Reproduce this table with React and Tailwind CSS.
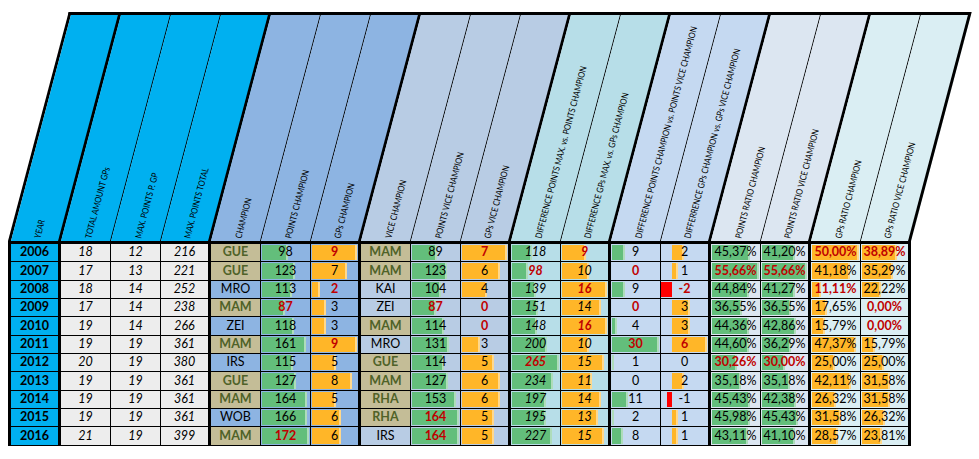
import React from "react";

const HEADERS = [
  "YEAR",
  "TOTAL AMOUNT GPs",
  "MAX. POINTS P. GP",
  "MAX. POINTS TOTAL",
  "CHAMPION",
  "POINTS CHAMPION",
  "GPs CHAMPION",
  "VICE CHAMPION",
  "POINTS VICE CHAMPION",
  "GPs VICE CHAMPION",
  "DIFFERENCE POINTS MAX. vs. POINTS CHAMPION",
  "DIFFERENCE GPs MAX. vs. GPs CHAMPION",
  "DIFFERENCE POINTS CHAMPION vs. POINTS VICE CHAMPION",
  "DIFFERRENCE GPs CHAMPION vs. GPs VICE CHAMPION",
  "POINTS RATIO CHAMPION",
  "POINTS RATIO VICE CHAMPION",
  "GPs RATIO CHAMPION",
  "GPs RATIO VICE CHAMPION",
];

const HEAD_BG = [
  "bg-[#00b0f0]", "bg-[#00b0f0]", "bg-[#00b0f0]", "bg-[#00b0f0]",
  "bg-[#8db4e2]", "bg-[#8db4e2]", "bg-[#8db4e2]",
  "bg-[#b8cce4]", "bg-[#b8cce4]", "bg-[#b8cce4]",
  "bg-[#b7dee8]", "bg-[#b7dee8]",
  "bg-[#c5d9f1]", "bg-[#c5d9f1]",
  "bg-[#dce6f1]", "bg-[#dce6f1]",
  "bg-[#daeef3]", "bg-[#daeef3]",
];

const BODY_BG = [
  "bg-[#00b0f0]", "bg-[#ededed]", "bg-[#ededed]", "bg-[#ededed]",
  "bg-[#8db4e2]", "bg-[#8db4e2]", "bg-[#8db4e2]",
  "bg-[#b8cce4]", "bg-[#b8cce4]", "bg-[#b8cce4]",
  "bg-[#b7dee8]", "bg-[#b7dee8]",
  "bg-[#c5d9f1]", "bg-[#c5d9f1]",
  "bg-[#dce6f1]", "bg-[#dce6f1]",
  "bg-[#daeef3]", "bg-[#daeef3]",
];

const THICK = new Set([0, 3, 6, 9, 11, 13, 15, 17]);
const ITALIC = new Set([1, 2, 3, 10, 11]);

// column -> [bar colour, scale max]
const BARS = {
  5: ["green", 172],
  6: ["orange", 9],
  8: ["green", 164],
  9: ["orange", 7],
  10: ["green", 265],
  11: ["orange", 16],
  12: ["green", 30],
  14: ["green", 55.66],
  15: ["green", 55.66],
  16: ["orange", 50],
  17: ["orange", 50],
};

const TAN = new Set(["GUE", "MAM", "RHA"]);

const ROWS = [
  [2006, 18, 12, 216, "GUE", 98, 9, "MAM", 89, 7, 118, 9, 9, 2, "45,37%", "41,20%", "50,00%", "38,89%"],
  [2007, 17, 13, 221, "GUE", 123, 7, "MAM", 123, 6, 98, 10, 0, 1, "55,66%", "55,66%", "41,18%", "35,29%"],
  [2008, 18, 14, 252, "MRO", 113, 2, "KAI", 104, 4, 139, 16, 9, -2, "44,84%", "41,27%", "11,11%", "22,22%"],
  [2009, 17, 14, 238, "MAM", 87, 3, "ZEI", 87, 0, 151, 14, 0, 3, "36,55%", "36,55%", "17,65%", "0,00%"],
  [2010, 19, 14, 266, "ZEI", 118, 3, "MAM", 114, 0, 148, 16, 4, 3, "44,36%", "42,86%", "15,79%", "0,00%"],
  [2011, 19, 19, 361, "MAM", 161, 9, "MRO", 131, 3, 200, 10, 30, 6, "44,60%", "36,29%", "47,37%", "15,79%"],
  [2012, 20, 19, 380, "IRS", 115, 5, "GUE", 114, 5, 265, 15, 1, 0, "30,26%", "30,00%", "25,00%", "25,00%"],
  [2013, 19, 19, 361, "GUE", 127, 8, "MAM", 127, 6, 234, 11, 0, 2, "35,18%", "35,18%", "42,11%", "31,58%"],
  [2014, 19, 19, 361, "MAM", 164, 5, "RHA", 153, 6, 197, 14, 11, -1, "45,43%", "42,38%", "26,32%", "31,58%"],
  [2015, 19, 19, 361, "WOB", 166, 6, "RHA", 164, 5, 195, 13, 2, 1, "45,98%", "45,43%", "31,58%", "26,32%"],
  [2016, 21, 19, 399, "MAM", 172, 6, "IRS", 164, 5, 227, 15, 8, 1, "43,11%", "41,10%", "28,57%", "23,81%"],
];

// col -> rows whose value is printed in red
const RED = {
  5: [3, 10],
  6: [0, 2, 5],
  8: [3, 9, 10],
  9: [0, 3, 4],
  10: [1, 6],
  11: [0, 2, 4],
  12: [1, 3, 5],
  13: [2, 5],
  14: [1, 6],
  15: [1, 6],
  16: [0, 2],
  17: [0, 3, 4],
};

const num = (v) => (typeof v === "string" ? parseFloat(v.replace(",", ".")) : v);

function Bar({ color, left, width }) {
  const cls =
    color === "green"
      ? "bg-[#63be7b] border-r-2 border-[#aedcba]"
      : color === "red"
        ? "bg-[#ff0000]"
        : "bg-[#ffb628] border-r-2 border-[#ffd88c]";
  return (
    <div
      className={`absolute top-[1px] bottom-[1px] ${cls}`}
      style={{ left, width }}
    />
  );
}

function BodyCell({ value, col, row }) {
  const red = RED[col]?.includes(row);
  let bg = BODY_BG[col];
  let text = "text-black";
  let weight = "";
  if ((col === 4 || col === 7) && TAN.has(value)) {
    bg = "bg-[#c4bd97]";
    text = "text-[#4f6228]";
    weight = "font-bold";
  }
  if (col === 0) weight = "font-bold";
  if (red) {
    text = "text-[#c00000]";
    weight = "font-bold";
  }

  let bar = null;
  if (BARS[col]) {
    const [color, max] = BARS[col];
    const p = (num(value) / max) * 100;
    if (p > 0) bar = <Bar color={color} left="1px" width={`calc(${p}% - 2px)`} />;
  } else if (col === 13) {
    const v = value;
    if (v > 0) bar = <Bar color="orange" left="24%" width={`${(v / 6) * 74}%`} />;
    if (v < 0) {
      const w = (-v / 2) * 23;
      bar = <Bar color="red" left={`${24 - w}%`} width={`${w}%`} />;
    }
  }

  return (
    <div
      className={`relative flex w-[50px] shrink-0 items-center justify-center border-b border-black ${
        THICK.has(col) ? "border-r-[3px]" : "border-r"
      } ${bg}`}
    >
      {bar}
      <span
        className={`relative text-[12.5px] leading-none ${text} ${weight} ${
          ITALIC.has(col) ? "italic" : ""
        }`}
      >
        {value}
      </span>
    </div>
  );
}

function Header() {
  return (
    <div className="ml-[8px] mt-[12px] flex h-[229px] w-max origin-bottom border-l-[3px] border-t-[3px] border-black [transform:skewX(-14.85deg)]">
      {HEADERS.map((h, i) => (
        <div
          key={h}
          className={`flex w-[50px] shrink-0 items-end justify-center pb-[3px] pl-[3px] border-black ${
            THICK.has(i) ? "border-r-[3px]" : "border-r"
          } ${HEAD_BG[i]}`}
        >
          <div className="relative h-0 w-0">
            <span className="absolute bottom-0 left-0 origin-bottom-left whitespace-nowrap text-[9px] leading-none text-black [transform:skewX(14.85deg)_rotate(-75.15deg)_scaleX(0.84)_translateY(50%)]">
              {h}
            </span>
          </div>
        </div>
      ))}
    </div>
  );
}

export default function App() {
  return (
    <div className="h-[459px] w-[979px] overflow-hidden bg-white font-['Lato','Noto_Sans',sans-serif]">
      <Header />
      <div className="ml-[8px] w-max border-l-[3px] border-t-[3px] border-black">
        {ROWS.map((r, ri) => (
          <div key={r[0]} className="flex h-[18.33px]">
            {r.map((v, ci) => (
              <BodyCell key={ci} value={v} col={ci} row={ri} />
            ))}
          </div>
        ))}
      </div>
    </div>
  );
}
